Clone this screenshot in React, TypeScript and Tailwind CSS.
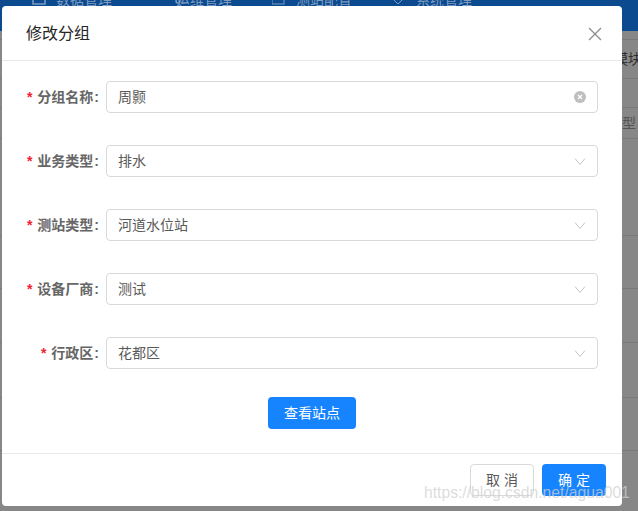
import React from 'react';

const FONT = "font-['Liberation_Sans','Noto_Sans_CJK_SC',sans-serif]";

const fields = [
  { label: '分组名称', value: '周颢', clear: true },
  { label: '业务类型', value: '排水' },
  { label: '测站类型', value: '河道水位站' },
  { label: '设备厂商', value: '测试' },
  { label: '行政区', value: '花都区' },
];

const Field: React.FC<{ label: string; value: string; clear?: boolean }> = ({ label, value, clear }) => (
  <div className="flex items-center h-8">
    <div className="w-[104px] flex justify-end items-center text-sm font-bold text-[#666666] whitespace-nowrap">
      <span className="text-[#f5222d] mr-[5px]">*</span>
      <span>{label}</span>
      <span className="ml-[1px] mr-[7px]">:</span>
    </div>
    <div className="w-[492px] h-8 flex items-center justify-between border border-[#d9d9d9] rounded pl-[11px] pr-[11px] text-sm text-[#595959]">
      <span>{value}</span>
      {clear ? (
        <svg width="12" height="12" viewBox="0 0 12 12">
          <circle cx="6" cy="6" r="6" fill="#bfbfbf" />
          <path d="M4 4l4 4M8 4l-4 4" stroke="#fff" strokeWidth="1.2" />
        </svg>
      ) : (
        <svg width="12" height="12" viewBox="0 0 12 12" fill="none">
          <path d="M1 3.5l5 6 5-6" stroke="#c4c4c4" strokeWidth="1" />
        </svg>
      )}
    </div>
  </div>
);

const navItems = [
  { label: '数据管理', icon: <rect x="1" y="-6" width="12" height="10" stroke="#7f9cc0" strokeWidth="1.5" fill="none" /> },
  { label: '运维管理', icon: <circle cx="26" cy="1" r="2" stroke="#7f9cc0" strokeWidth="1.5" fill="none" /> },
  { label: '测站配置', icon: <rect x="0" y="-6" width="12" height="10" stroke="#7f9cc0" strokeWidth="1" fill="none" /> },
  { label: '系统管理', icon: <path d="M0-2l6 6 6-6" stroke="#7f9cc0" strokeWidth="1" fill="none" /> },
];

// rows of the table behind the mask
const rows = [
  { h: 'h-[9px]', text: '', cls: '' },
  { h: 'h-[39px]', text: '模块', cls: 'pl-[614px] text-[#2e2e2e] leading-[38px]' },
  { h: 'h-[29px]', text: '', cls: '' },
  { h: 'h-[31px]', text: '型', cls: 'pl-[622px] text-[#555555] leading-[30px]' },
  { h: 'h-[97px]', text: '', cls: '' },
  { h: 'h-[53px]', text: '', cls: '' },
  { h: 'h-[54px]', text: '', cls: '' },
  { h: 'h-[55px]', text: '', cls: '' },
  { h: 'h-[53px]', text: '', cls: '' },
];

export default function App() {
  return (
    <div className={`relative w-[638px] h-[511px] overflow-hidden bg-[#878787] ${FONT}`}>
      {/* page behind the mask */}
      <div className="h-[31px] bg-[#0b4a8f] flex items-start pl-[32px] text-sm text-[#7f9cc0] leading-none">
        {navItems.map((n) => (
          <div key={n.label} className="w-[120px] h-[6px] flex items-start gap-[10px] overflow-hidden">
            <svg width="14" height="6" viewBox="0 0 14 6" className="shrink-0 overflow-visible">
              {n.icon}
            </svg>
            <span className="-mt-[7px] whitespace-nowrap">{n.label}</span>
          </div>
        ))}
      </div>
      <div className="flex flex-col text-sm whitespace-nowrap">
        {rows.map((r, i) => (
          <div key={i} className={`${r.h} ${r.cls} border-b border-[#7a7a7a] overflow-hidden`}>
            {r.text}
          </div>
        ))}
      </div>

      <div className="absolute left-[2px] top-[6px] w-[620px] h-[500px] bg-white rounded flex flex-col">
        <div className="h-[55px] shrink-0 border-b border-[#e8e8e8] flex items-center justify-between pl-[24px] pr-[20px] pt-[1px]">
          <span className="text-base text-[#262626]">修改分组</span>
          <svg width="14" height="14" viewBox="0 0 14 14" fill="none">
            <path d="M1 1l12 12M13 1L1 13" stroke="#8c8c8c" strokeWidth="1.3" />
          </svg>
        </div>
        <div className="flex-1 flex flex-col pt-[20px] gap-[32px]">
          {fields.map((f) => (
            <Field key={f.label} {...f} />
          ))}
          <div className="flex justify-center -mt-[4px]">
            <button className="w-[88px] h-8 bg-[#1784ff] rounded text-sm text-white">查看站点</button>
          </div>
        </div>
        <div className="h-[53px] shrink-0 border-t border-[#e8e8e8] flex justify-end gap-2 pt-[10px] pr-[16px]">
          <button className="w-16 h-8 border border-[#d9d9d9] rounded text-sm text-[#595959]">取 消</button>
          <button className="w-16 h-8 bg-[#1784ff] rounded text-sm text-white">确 定</button>
        </div>
      </div>

      <div className="absolute left-[424px] top-[483px] text-[15.7px] leading-[20px] text-[#d0d0d0]/75 whitespace-nowrap">
        https://blog.csdn.net/agua001
      </div>
    </div>
  );
}
